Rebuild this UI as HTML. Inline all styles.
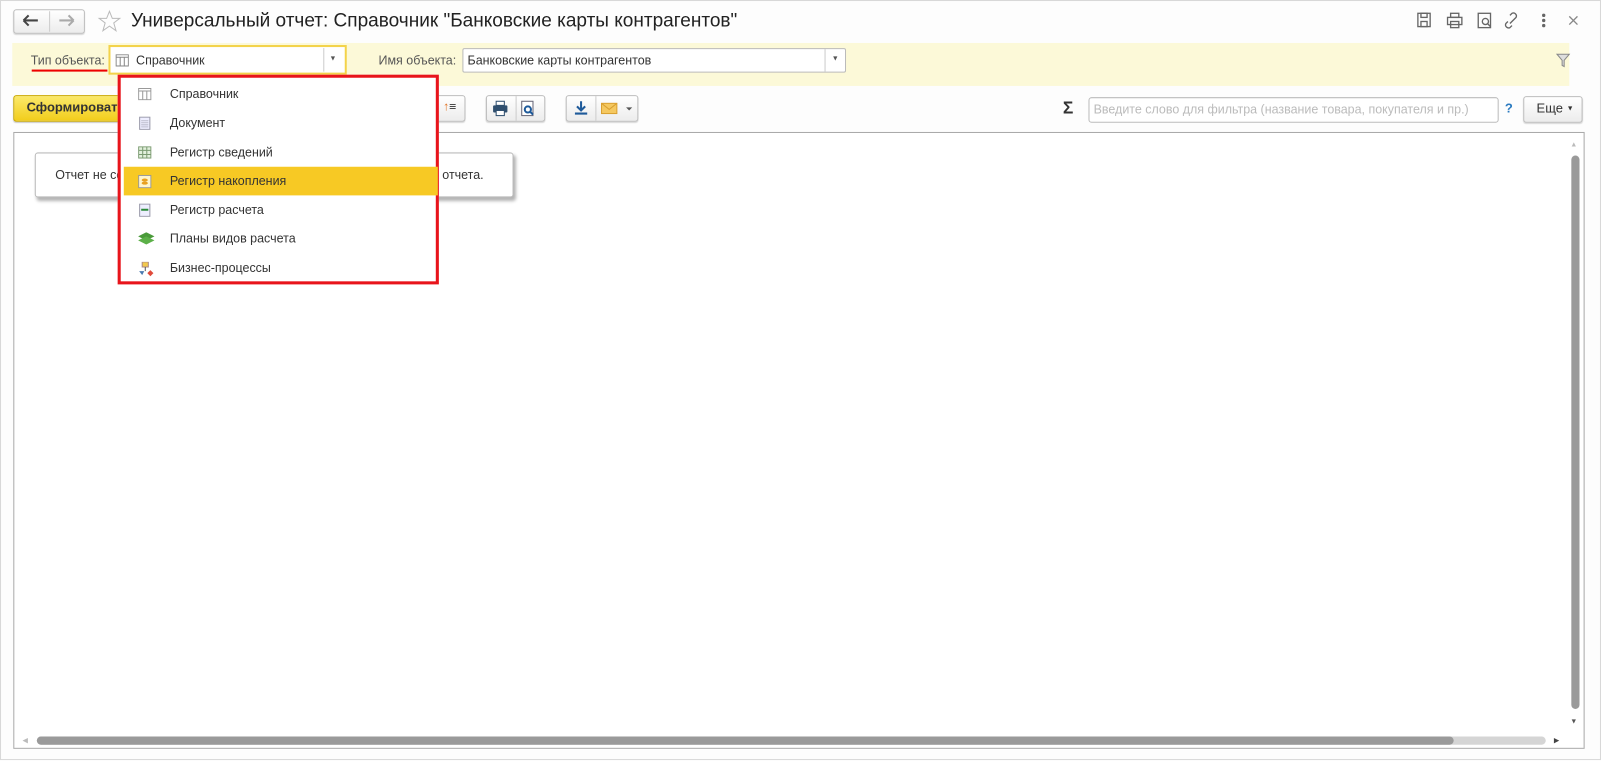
<!DOCTYPE html>
<html><head><meta charset="utf-8"><style>
*{box-sizing:border-box;margin:0;padding:0}
body{width:1602px;height:761px;background:#fff;font-family:"Liberation Sans",Arial,sans-serif;font-size:12.7px;color:#333;position:relative;overflow:hidden}
#w{position:absolute;left:0;top:0;width:1566px;height:744px;transform:scale(1.023);transform-origin:0 0}
.a{position:absolute}
.btn{position:absolute;border:1px solid #bdbdbd;border-radius:3px;background:linear-gradient(#fff,#ececec);box-shadow:0 1px 1px rgba(0,0,0,.15)}
.item{position:absolute;left:3px;width:307px;height:28px;line-height:28px;font-size:12.2px;color:#333}
.item span{position:absolute;left:45px}
.item i{position:absolute;display:block;left:14px;top:8px;width:16px;height:13px}
.item i svg{display:block}
</style></head><body><div id="w">
<div class="a" style="left:0;top:0;width:1565px;height:743px;border:1px solid #d8d8d8;background:#fdfdfd"></div>
<div class="btn" style="left:13px;top:9px;width:70px;height:24px"></div>
<div class="a" style="left:48px;top:11px;width:1px;height:20px;background:#ccc"></div>
<svg class="a" style="left:22px;top:14px" width="16" height="12"><path d="M1 6H15M1 6L6 1M1 6L6 11" stroke="#444" stroke-width="2" fill="none"/></svg>
<svg class="a" style="left:57px;top:14px" width="16" height="12"><path d="M1 6H15M15 6L10 1M15 6L10 11" stroke="#aaa" stroke-width="2" fill="none"/></svg>
<svg class="a" style="left:95px;top:9px" width="24" height="24"><path d="M12 2L14.8 9H22L16.2 13.4L18.4 21L12 16.5L5.6 21L7.8 13.4L2 9H9.2Z" stroke="#bbb" fill="none"/></svg>
<div class="a" style="left:128px;top:9px;font-size:18.6px;color:#222">Универсальный отчет: Справочник "Банковские карты контрагентов"</div>
<svg class="a" style="left:1380px;top:11px" width="170" height="18" fill="none" stroke="#666" stroke-width="1.3">
<rect x="6" y="2" width="12" height="13"/><rect x="9" y="2" width="6" height="4"/><rect x="9" y="10" width="6" height="5"/>
<rect x="35" y="6" width="14" height="7"/><rect x="38" y="2" width="8" height="4"/><rect x="38" y="10" width="8" height="6"/>
<rect x="65" y="2" width="12" height="14"/><circle cx="72" cy="10" r="3"/><path d="M74 12L77 15"/>
<path d="M96 12L102 6M94 10L92 12A3 3 0 0 0 96 16L98 14M100 8L102 6A3 3 0 0 0 98 2L96 4"/>
<circle cx="129" cy="4" r="1" fill="#666"/><circle cx="129" cy="9" r="1" fill="#666"/><circle cx="129" cy="14" r="1" fill="#666"/>
<path d="M154 5L162 13M162 5L154 13" stroke="#888"/>
</svg>
<div class="a" style="left:12px;top:42px;width:1522px;height:42px;background:#fcf9d8"></div>
<div class="a" style="left:30px;top:52px;font-size:12.2px;color:#555">Тип объекта:</div>
<div class="a" style="left:31px;top:68px;width:74px;height:2px;background:#e00"></div>
<div class="a" style="left:106px;top:44px;width:233px;height:29px;border:2px solid #f3d34a;background:#fff"></div>
<div class="a" style="left:316px;top:47px;width:1px;height:23px;background:#ccc"></div>
<div class="a" style="left:322px;top:54px;font-size:7px;color:#555">▼</div>
<svg class="a" style="left:113px;top:53px" width="13" height="12"><rect x=".5" y=".5" width="12" height="11" fill="#fff" stroke="#888"/><path d="M.5 3H12.5M4.5 3V11.5M8.5 3V11.5" stroke="#888"/></svg>
<div class="a" style="left:133px;top:52px;font-size:12.2px;color:#333">Справочник</div>
<div class="a" style="left:370px;top:52px;font-size:12.2px;color:#555">Имя объекта:</div>
<div class="a" style="left:452px;top:47px;width:375px;height:24px;border:1px solid #bbb;background:#fff;border-radius:2px"></div>
<div class="a" style="left:806px;top:48px;width:1px;height:22px;background:#ccc"></div>
<div class="a" style="left:813px;top:54px;font-size:7px;color:#555">▼</div>
<div class="a" style="left:457px;top:52px;font-size:12.2px;color:#333">Банковские карты контрагентов</div>
<svg class="a" style="left:1521px;top:52px" width="14" height="14"><path d="M1 1H13L8 7V13L6 12V7Z" fill="#ddd" stroke="#888"/></svg>
<div class="a" style="left:13px;top:93px;width:110px;height:26px;border:1px solid #c9a800;border-radius:3px;background:linear-gradient(#fbe96a,#f2cd1b);box-shadow:0 1px 1px rgba(0,0,0,.2)"></div>
<div class="a" style="left:26px;top:98px;font-size:12.7px;font-weight:bold;color:#333">Сформировать</div>
<div class="btn" style="left:420px;top:93px;width:35px;height:26px"></div>
<div class="a" style="left:433px;top:97px;font-size:12px;color:#333"><span style="color:#e07020">↑</span>≡</div>
<div class="btn" style="left:475px;top:93px;width:58px;height:26px"></div>
<div class="a" style="left:504px;top:94px;width:1px;height:24px;background:#ccc"></div>
<svg class="a" style="left:481px;top:98px" width="50" height="16"><rect x="1" y="5" width="14" height="7" rx="1" fill="#2f4f6f"/><rect x="4" y="1" width="8" height="4" fill="#fff" stroke="#2f4f6f"/><rect x="4" y="10" width="8" height="5" fill="#fff" stroke="#2f4f6f"/><rect x="29" y="1" width="11" height="14" fill="#fff" stroke="#667"/><circle cx="35" cy="9" r="3" fill="none" stroke="#1e5a9a" stroke-width="2"/><path d="M37 11L40 14" stroke="#1e5a9a" stroke-width="2"/></svg>
<div class="btn" style="left:553px;top:93px;width:71px;height:26px"></div>
<div class="a" style="left:582px;top:94px;width:1px;height:24px;background:#ccc"></div>
<svg class="a" style="left:560px;top:98px" width="62" height="16"><path d="M8 1V10M4 6L8 10L12 6M2 13H14" stroke="#1e5a9a" stroke-width="2" fill="none"/><rect x="28" y="3" width="15" height="10" fill="#f5c860" stroke="#d9a030"/><path d="M28 3L35.5 9L43 3" stroke="#d9a030" fill="none"/><path d="M52 7H58L55 10Z" fill="#555"/></svg>
<div class="a" style="left:1039px;top:96px;font-size:17px;font-weight:bold;color:#333">Σ</div>
<div class="a" style="left:1064px;top:95px;width:401px;height:25px;border:1px solid #bbb;border-radius:3px;background:#fff"></div>
<div class="a" style="left:1069px;top:100px;font-size:12.2px;color:#bbb">Введите слово для фильтра (название товара, покупателя и пр.)</div>
<div class="a" style="left:1471px;top:99px;font-size:12.7px;color:#2a7ac0;font-weight:bold">?</div>
<div class="btn" style="left:1489px;top:94px;width:58px;height:26px"></div>
<div class="a" style="left:1502px;top:99px;font-size:12.7px;color:#333">Еще <span style="font-size:7px;position:relative;top:-2px">▼</span></div>
<div class="a" style="left:13px;top:129px;width:1536px;height:603px;border:1px solid #aaa;background:#fff"></div>
<div class="a" style="left:34px;top:149px;width:468px;height:44px;border:1px solid #bbb;border-radius:3px;background:#fff;box-shadow:2px 3px 3px rgba(0,0,0,.3)"></div>
<div class="a" style="left:54px;top:164px;font-size:12.2px;color:#333">Отчет не сформирован. Нажмите "Сформировать" для получения отчета.</div>
<div class="a" style="left:1535px;top:138px;font-size:7px;color:#bbb">▲</div>
<div class="a" style="left:1536px;top:152px;width:8px;height:541px;border-radius:4px;background:#9a9a9a"></div>
<div class="a" style="left:1535px;top:702px;font-size:7px;color:#555">▼</div>
<div class="a" style="left:22px;top:720px;font-size:7px;color:#bbb">◀</div>
<div class="a" style="left:36px;top:720px;width:1475px;height:8px;border-radius:4px;background:#d5d5d5"></div>
<div class="a" style="left:36px;top:720px;width:1385px;height:8px;border-radius:4px;background:#9a9a9a"></div>
<div class="a" style="left:1519px;top:720px;font-size:7px;color:#444">▶</div>
<div class="a" style="left:115px;top:73px;width:314px;height:205px;border:3px solid #e8141b;background:#fff">
<div class="item" style="top:2px"><i><svg width="13" height="12"><rect x=".5" y=".5" width="12" height="11" fill="#fff" stroke="#999"/><path d="M.5 3H12.5M4.5 3V11.5M8.5 3V11.5" stroke="#999"/></svg></i><span>Справочник</span></div>
<div class="item" style="top:30px"><i><svg width="13" height="13"><rect x="1.5" y=".5" width="10" height="12" fill="#eef" stroke="#99a"/><path d="M3 4H10M3 6H10M3 8H10M3 10H10" stroke="#bbc"/></svg></i><span>Документ</span></div>
<div class="item" style="top:59px"><i><svg width="13" height="12"><rect x=".5" y=".5" width="12" height="11" fill="#e2f0dc" stroke="#7a9a70"/><path d="M.5 4H12.5M.5 8H12.5M4.5 .5V11.5M8.5 .5V11.5" stroke="#7a9a70"/></svg></i><span>Регистр сведений</span></div>
<div class="item" style="top:87px;background:#f7c924"><i><svg width="13" height="13"><rect x=".5" y=".5" width="12" height="12" fill="#fff5cc" stroke="#999"/><ellipse cx="6.5" cy="5" rx="3" ry="1.5" fill="#e8a020"/><ellipse cx="6.5" cy="8" rx="3" ry="1.5" fill="#e8a020"/></svg></i><span>Регистр накопления</span></div>
<div class="item" style="top:115px"><i><svg width="13" height="13"><rect x="1.5" y=".5" width="10" height="12" fill="#eef" stroke="#99a"/><path d="M3 6H10" stroke="#2a8a3a" stroke-width="2"/></svg></i><span>Регистр расчета</span></div>
<div class="item" style="top:143px"><i><svg width="16" height="12"><path d="M0 4L8 0L16 4L8 8Z" fill="#4a9a3a"/><path d="M0 8L8 4L16 8L8 12Z" fill="#5cb048"/></svg></i><span>Планы видов расчета</span></div>
<div class="item" style="top:172px"><i><svg width="16" height="15"><rect x="4" y="0" width="6" height="5" fill="#f2c94c" stroke="#a88"/><path d="M7 5V9" stroke="#555"/><path d="M1 9H6L4 13Z" fill="#4a7ab0"/><path d="M12 8L15 11L12 14L9 11Z" fill="#e04a3a"/></svg></i><span>Бизнес-процессы</span></div>
</div>
</div></body></html>
